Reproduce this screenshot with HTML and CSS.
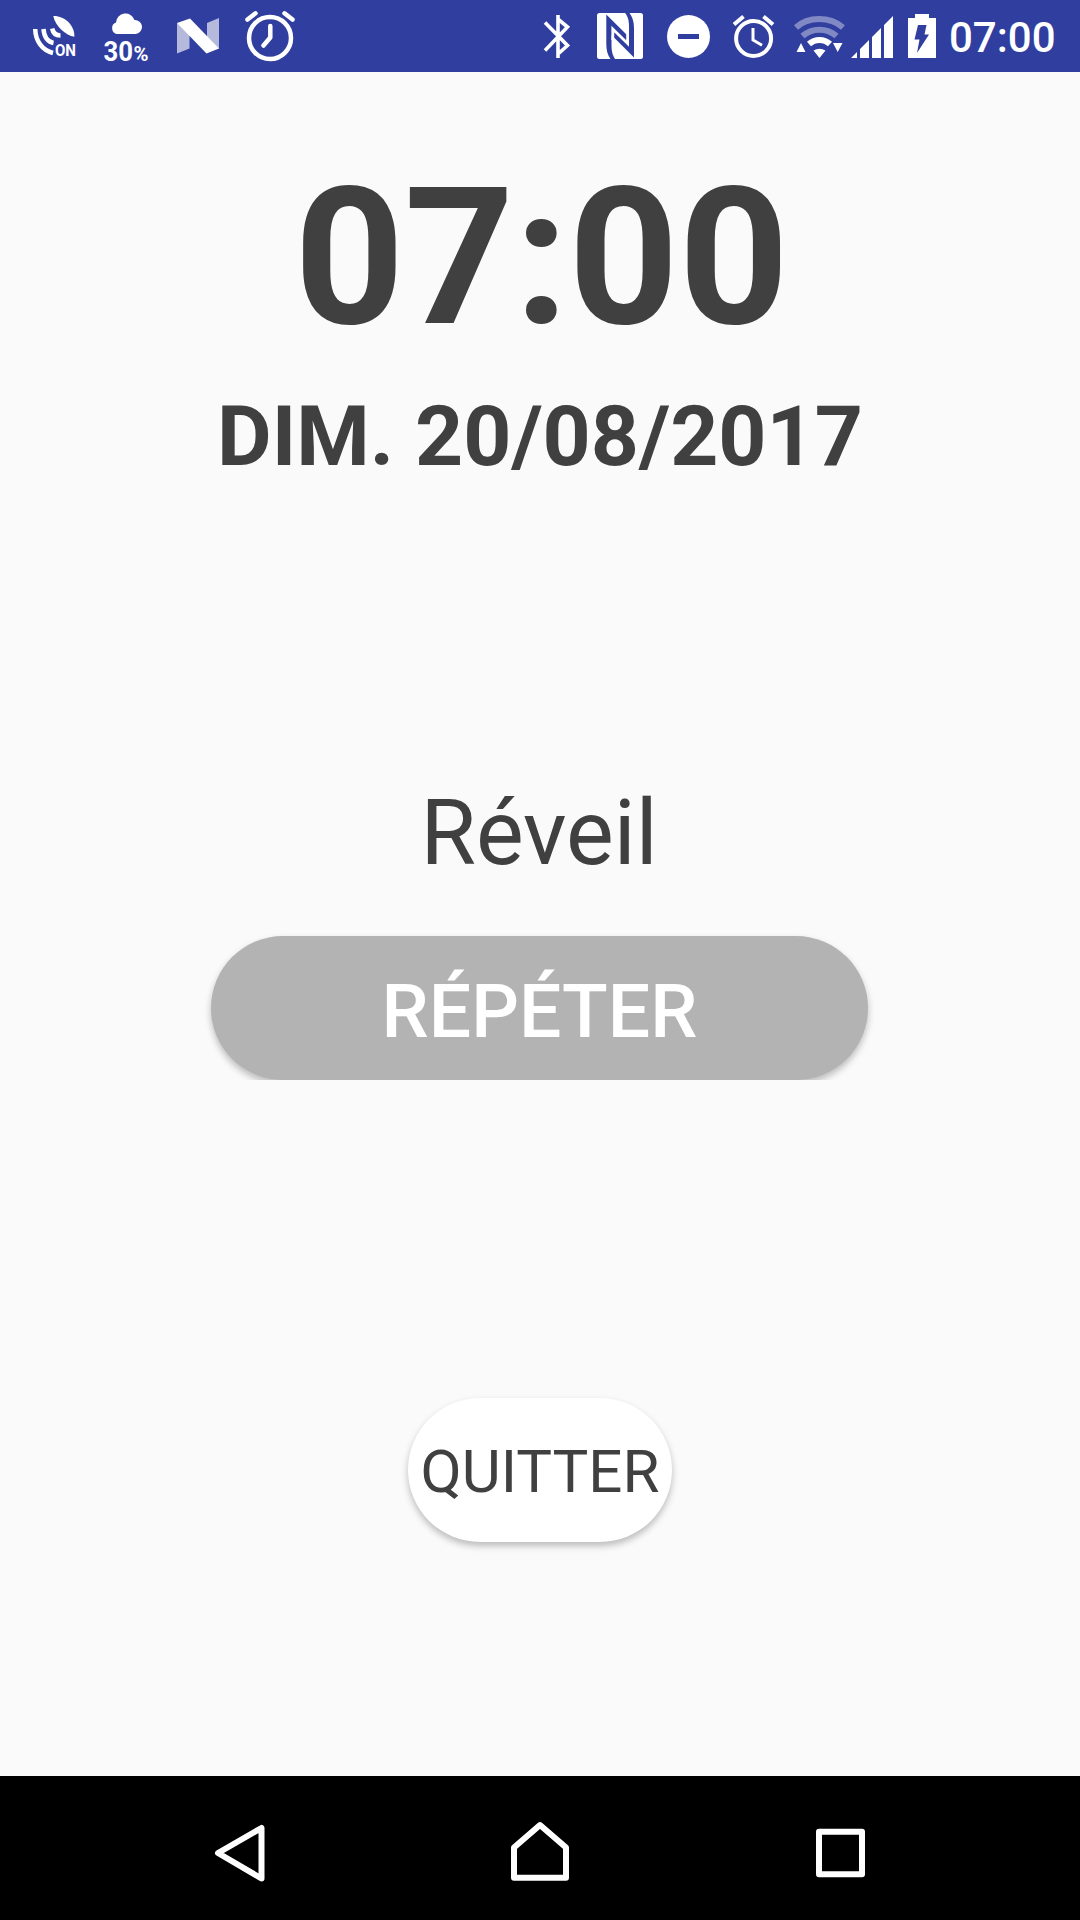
FILE: index.html
```html
<!DOCTYPE html>
<html lang="fr">
<head>
  <meta charset="UTF-8">
  <meta name="viewport" content="width=device-width, initial-scale=1.0">
  <title>Réveil</title>
  <link rel="stylesheet" href="styles.css">
</head>
<body>
  <header class="status-bar">
    <div class="notifications">
      <!-- GPS -->
      <svg width="72" height="72" viewBox="0 0 72 72">
        <path fill="#fff" d="M35.300 16C46 15.500 57 25 56.300 36.800C48 35.500 37 26 35.300 16Z"/>
        <g fill="none" stroke="#fff" stroke-width="4.500">
          <path d="M17.200 29C17.500 41 24 50 35 53"/>
          <path d="M25.500 29C26 37 30 42 35.500 43"/>
          <path d="M34.200 28.500C35 33 38 35.500 42.500 35.500"/>
        </g>
        <text class="gps-label" x="37" y="55.500" textLength="21" lengthAdjust="spacingAndGlyphs">ON</text>
      </svg>
      <!-- Weather -->
      <svg width="72" height="72" viewBox="0 0 72 72">
        <path fill="#fff" d="M27 34a6 6 0 0 1-1-11.500a9.500 9.500 0 0 1 18.500-2.500a7 7 0 0 1 1 14z"/>
        <text class="rain-value" x="13.500" y="60.500" textLength="29.500" lengthAdjust="spacingAndGlyphs">30</text>
        <text class="rain-unit" x="43.500" y="60.500" textLength="15" lengthAdjust="spacingAndGlyphs">%</text>
      </svg>
      <!-- Android N -->
      <svg width="72" height="72" viewBox="0 0 72 72">
        <path fill="#b5badc" d="M15 23L27.500 30V48.500L15 53.500ZM45 23L57 18V49L45 40Z"/>
        <path fill="#fff" d="M15 23L28 18.500L57 48.500L44.500 53.500Z"/>
      </svg>
      <!-- Alarm -->
      <svg width="72" height="72" viewBox="0 0 72 72" fill="none" stroke="#fff" stroke-width="4.500" stroke-linecap="round" stroke-linejoin="round">
        <circle cx="36" cy="38" r="21"/>
        <path d="M36.300 26V37.500L29.500 45.500M13.500 19.500L21.500 13.300M50.500 13.300L58.500 19.500"/>
      </svg>
    </div>
    <div class="system">
      <!-- Bluetooth -->
      <svg width="60" height="72" viewBox="0 0 60 72" fill="none" stroke="#fff" stroke-width="3.600">
        <path d="M17 22.500L39.500 45.500L30 54V19L39.500 27L17 50.500M30 15V58"/>
      </svg>
      <!-- NFC -->
      <svg width="64" height="72" viewBox="0 0 64 72">
        <rect x="9" y="13" width="46" height="46" rx="2.500" fill="#fff"/>
        <path fill="#303f9f" d="M18.300 14.500L41 37V26C41 19 39 15 37 13H41.500C44.500 17 46 22 46 28V57.500L23.500 35V46C23.500 52 25 56 27 59H22.500C19.500 55 18.300 50 18.300 44Z"/>
        <path fill="none" stroke="#fff" stroke-width="2.800" d="M39.600 33V43.500L24.800 29V40"/>
      </svg>
      <!-- Do not disturb -->
      <svg width="72" height="72" viewBox="0 0 72 72">
        <circle cx="36.500" cy="36.500" r="21.500" fill="#fff"/>
        <path fill="#303f9f" d="M26 34h21v5H26z"/>
      </svg>
      <!-- Alarm -->
      <svg width="60" height="72" viewBox="0 0 60 72" fill="none" stroke="#fff" stroke-width="4">
        <circle cx="29.600" cy="38.500" r="17.500"/>
        <path d="M10 24.500L19.500 16.500M39.500 16.500L49 24.500"/>
        <path stroke-width="3" d="M29 28V40L38 45.300"/>
      </svg>
      <!-- Wifi -->
      <svg width="64" height="72" viewBox="0 0 64 72">
        <g fill="none" stroke="#8089c3" stroke-width="6">
          <path d="M12 27.500C24 16.200 46 16.200 59 27.500"/>
          <path d="M18.500 36C28 27.500 43 27.500 52.500 36"/>
        </g>
        <path fill="none" stroke="#fff" stroke-width="6" d="M25 44C31 38.500 40 38.500 46 44"/>
        <path fill="#fff" d="M29.500 50.500Q35.500 47 41.500 50.500L35.500 58ZM17 43L21.500 52H12.500ZM49 43H58.500L53.700 52Z"/>
      </svg>
      <!-- Signal -->
      <svg width="52" height="72" viewBox="0 0 52 72" fill="#fff">
        <path d="M3 58L9 52V58ZM12 49L21 40V58H12ZM24 37L33 28V58H24ZM36 25L45 16V58H36Z"/>
      </svg>
      <!-- Battery -->
      <svg width="44" height="72" viewBox="0 0 44 72">
        <path fill="#fff" d="M15 14H29V18H36V58H8V18H15Z"/>
        <path fill="#303f9f" d="M18 25H26.500L24.500 34.500H29L17 53L19.500 39.500H14.500Z"/>
      </svg>
      <span class="status-time">07:00</span>
    </div>
  </header>

  <main class="alarm">
    <div class="time">07:00</div>
    <div class="date">DIM. 20/08/2017</div>
    <div class="label">Réveil</div>
    <div class="snooze-wrap">
      <button class="btn btn-snooze">RÉPÉTER</button>
    </div>
    <button class="btn btn-quit">QUITTER</button>
  </main>

  <nav class="nav-bar">
    <svg width="60" height="72" viewBox="0 0 60 72">
      <path d="M8 36L51.500 11V61.500Z"/>
    </svg>
    <svg width="60" height="72" viewBox="0 0 60 72">
      <path d="M4 60.800V30.500L30 8L56 30.500V60.800Z"/>
    </svg>
    <svg width="60" height="72" viewBox="0 0 60 72">
      <path d="M9 14.800H52V57.200H9Z"/>
    </svg>
  </nav>
</body>
</html>
```
FILE: styles.css
```css
body {
  margin: 0;
  width: 1080px;
  height: 1920px;
  display: flex;
  flex-direction: column;
  overflow: hidden;
  background-color: #fafafa;
  color: #404040;
  font-family: Roboto, sans-serif;
}
svg {
  display: block;
  flex: none;
}
.status-bar {
  height: 72px;
  display: flex;
  justify-content: space-between;
  background-color: #303f9f;
  color: #fff;
}
.notifications {
  display: flex;
  padding-left: 18px;
}
.system {
  display: flex;
}
.status-time {
  width: 131px;
  padding-left: 5px;
  font-size: 42px;
  font-weight: 500;
  line-height: 75px;
}
.gps-label, .rain-value, .rain-unit {
  fill: #fff;
  font-weight: 700;
}
.gps-label {
  font-size: 16.5px;
}
.rain-value {
  font-size: 27.5px;
}
.rain-unit {
  font-size: 21px;
}
.alarm {
  flex: 1;
  display: flex;
  flex-direction: column;
  align-items: center;
}
.time {
  margin-top: 73px;
  padding-left: 3px;
  font-size: 192px;
  font-weight: 700;
  line-height: 225px;
}
.date {
  margin-top: 17px;
  font-size: 84px;
  font-weight: 700;
  line-height: 100px;
}
.label {
  margin-top: 294px;
  padding-right: 2px;
  font-size: 90px;
  line-height: 106px;
}
/* cuts the button shadow at the bottom edge */
.snooze-wrap {
  margin-top: 39px;
  margin-right: 1px;
  padding: 10px 10px 0;
  overflow: hidden;
}
.btn {
  display: block;
  box-sizing: border-box;
  height: 144px;
  border: none;
  border-radius: 72px;
  font-family: inherit;
}
.btn-snooze {
  width: 657px;
  padding: 5px 0 0;
  background-color: #b3b3b3;
  color: #fff;
  font-size: 75px;
  font-weight: 500;
  box-shadow: 0 4px 7px rgba(0,0,0,0.25);
}
.btn-quit {
  width: 264px;
  margin-top: 318px;
  padding: 3px 0 0;
  background-color: #fff;
  color: #404040;
  font-size: 60px;
  box-shadow: 0 4px 7px rgba(0,0,0,0.25);
}
.nav-bar {
  box-sizing: border-box;
  height: 144px;
  padding-top: 10px;
  display: flex;
  justify-content: center;
  align-items: center;
  gap: 240px;
  background-color: #000;
}
.nav-bar path {
  fill: none;
  stroke: #fff;
  stroke-width: 6px;
  stroke-linejoin: round;
}
```
